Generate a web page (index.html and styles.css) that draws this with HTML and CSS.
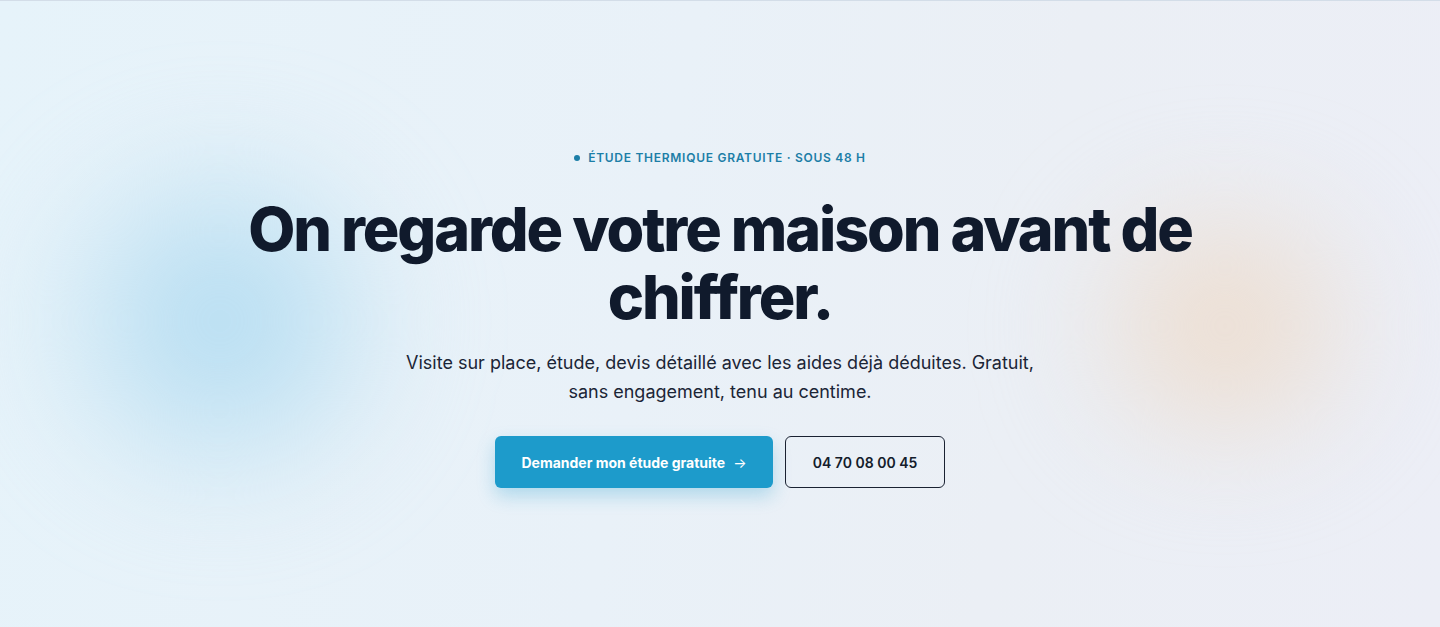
FILE: index.html
```html
<!DOCTYPE html>
<html lang="fr">

<head>
  <meta charset="utf-8">
  <meta name="viewport" content="width=device-width, initial-scale=1">
  <title>Étude thermique gratuite</title>
  <link rel="stylesheet" href="styles.css">
</head>

<body>
  <header class="topbar"></header>

  <!-- Hero -->
  <section class="hero">
    <span class="glow glow_blue"></span>
    <span class="glow glow_peach"></span>

    <div class="hero_inner">
      <p class="eyebrow"><span class="dot"></span>Étude thermique gratuite · sous 48 h</p>
      <h1>On regarde votre maison avant de chiffrer.</h1>
      <p class="lead">Visite sur place, étude, devis détaillé avec les aides déjà déduites. Gratuit, sans engagement, tenu au centime.</p>
      <div class="actions">
        <a class="btn btn_primary" href="#etude">Demander mon étude gratuite <span class="arrow">→</span></a>
        <a class="btn btn_ghost" href="tel:0470080045">04 70 08 00 45</a>
      </div>
    </div>
  </section>
</body>

</html>
```

FILE: styles.css
```css
* {
  box-sizing: border-box;
}

body {
  margin: 0;
  font-family: Inter, 'Noto Sans', sans-serif;
  color: #0f1b2d;
  background: #eaf1f8;
}

.topbar {
  height: 1px;
  background: #d3dde8;
}

.hero {
  position: relative;
  overflow: hidden;
  height: 626px;
  background: linear-gradient(100deg, #e6f3fa 0%, #e9f1f8 45%, #ebeff5 70%, #eceef6 100%);
}

/* soft colour blobs behind the text */
.glow {
  position: absolute;
  border-radius: 50%;
  filter: blur(50px);
  pointer-events: none;
}

.glow_blue {
  left: 10px;
  top: 140px;
  width: 420px;
  height: 360px;
  background: radial-gradient(circle, rgba(170, 216, 240, 0.95) 0%, rgba(188, 224, 242, 0.6) 40%, rgba(220, 236, 246, 0) 72%);
}

.glow_peach {
  left: 1050px;
  top: 190px;
  width: 350px;
  height: 270px;
  background: radial-gradient(circle, rgba(238, 218, 200, 1) 0%, rgba(236, 224, 214, 0.6) 45%, rgba(236, 234, 236, 0) 75%);
}

.hero_inner {
  position: relative;
  display: flex;
  flex-direction: column;
  align-items: center;
  text-align: center;
  padding-top: 149px;
}

.eyebrow {
  display: flex;
  align-items: center;
  gap: 8px;
  margin: 0;
  font-size: 12px;
  font-weight: 600;
  line-height: 16px;
  letter-spacing: 0.06em;
  text-transform: uppercase;
  color: #1c7ea7;
}

.dot {
  width: 6px;
  height: 6px;
  border-radius: 50%;
  background: #1c7ea7;
}

h1 {
  margin: 29px 0 0;
  max-width: 980px;
  font-size: 61px;
  font-weight: 800;
  line-height: 68px;
  letter-spacing: -0.035em;
  color: #101a2c;
}

.lead {
  margin: 17px 0 0;
  max-width: 640px;
  font-size: 18px;
  line-height: 29px;
  color: #1b2536;
}

.actions {
  display: flex;
  gap: 12px;
  margin-top: 30px;
}

.btn {
  display: inline-flex;
  align-items: center;
  justify-content: center;
  height: 52px;
  border-radius: 6px;
  font-size: 14px;
  font-weight: 700;
  text-decoration: none;
}

.btn_primary {
  width: 278px;
  gap: 8px;
  background: #1d9bcb;
  color: #fff;
  box-shadow: 0 8px 18px rgba(29, 155, 203, 0.28);
}

.arrow {
  font-weight: 400;
}

.btn_ghost {
  width: 160px;
  border: 1px solid #1a2232;
  color: #141c2b;
  font-weight: 600;
}
```
